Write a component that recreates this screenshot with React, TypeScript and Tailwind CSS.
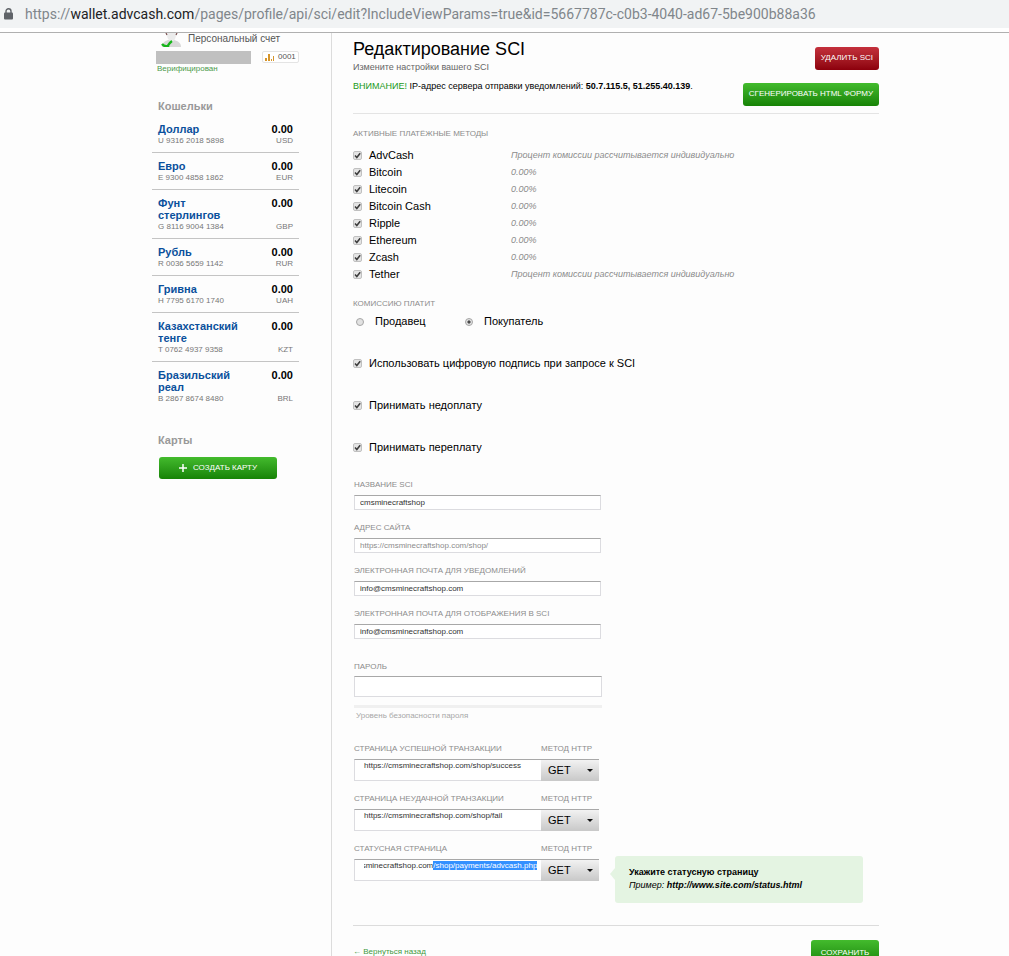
import { useEffect, useRef } from "react";
import type { ReactNode } from "react";

const wallets = [
  { name: "Доллар", number: "U 9316 2018 5898", code: "USD" },
  { name: "Евро", number: "E 9300 4858 1862", code: "EUR" },
  { name: "Фунт стерлингов", number: "G 8116 9004 1384", code: "GBP" },
  { name: "Рубль", number: "R 0036 5659 1142", code: "RUR" },
  { name: "Гривна", number: "H 7795 6170 1740", code: "UAH" },
  { name: "Казахстанский тенге", number: "T 0762 4937 9358", code: "KZT" },
  { name: "Бразильский реал", number: "B 2867 8674 8480", code: "BRL" },
];

const individual = "Процент комиссии рассчитывается индивидуально";

const methods = [
  { name: "AdvCash", fee: individual },
  { name: "Bitcoin", fee: "0.00%" },
  { name: "Litecoin", fee: "0.00%" },
  { name: "Bitcoin Cash", fee: "0.00%" },
  { name: "Ripple", fee: "0.00%" },
  { name: "Ethereum", fee: "0.00%" },
  { name: "Zcash", fee: "0.00%" },
  { name: "Tether", fee: individual },
];

const AddressBar = () => (
  <header className="shrink-0 border-b border-[#b0b0b0] bg-white pb-1">
    <div className="flex h-7 items-center gap-3 bg-[#f1f3f4] pl-1 font-[Roboto,sans-serif] text-sm text-[#80868b]">
      <svg className="h-3 w-[9px] shrink-0" viewBox="0 0 9 12" fill="none">
        <path d="M2 5V3.2a2.5 2.5 0 0 1 5 0V5" stroke="#5f6368" strokeWidth="1.4" />
        <rect y="4.5" width="9" height="7" rx="1" fill="#5f6368" />
      </svg>
      <span className="whitespace-nowrap">
        https://<span className="text-[#202124]">wallet.advcash.com</span>
        /pages/profile/api/sci/edit?IncludeViewParams=true&amp;id=5667787c-c0b3-4040-ad67-5be900b88a36
      </span>
    </div>
  </header>
);

const Avatar = () => (
  <svg className="h-[14px] w-5" viewBox="0 0 20 14" fill="none">
    <path d="M1 14c0-4 3-6 6-7h6c4 1 7 3 7 7z" fill="#d8d8d8" />
    <path d="M5 0h11l-2 6-3 4-4-4z" fill="#ebebeb" />
    <path d="M5 0l1 2M16 0l-1 2" stroke="#7a5050" strokeWidth="1.2" />
    <path d="M1 11c2 2.500 5 2.500 7 1.500M7 12.500c1-2 2-3 4-4.500" stroke="#18b51c" strokeWidth="2.400" />
  </svg>
);

const Check = ({ id }: { id: string }) => (
  <span className="grid size-[9px] shrink-0">
    <input
      id={id}
      type="checkbox"
      defaultChecked
      className="peer col-start-1 row-start-1 size-[9px] appearance-none rounded-xs border border-[#c0c0c0] bg-[#e4e4e4]"
    />
    <svg
      className="pointer-events-none invisible col-start-1 row-start-1 size-[9px] peer-checked:visible"
      viewBox="0 0 9 9"
      fill="none"
    >
      <path d="M2 4.600l1.800 1.900L7.200 2.200" stroke="#3c3c3c" strokeWidth="1.500" />
    </svg>
  </span>
);

const CheckRow = ({ id, children }: { id: string; children: ReactNode }) => (
  <div className="flex h-[17px] items-center gap-[7px]">
    <Check id={id} />
    <label htmlFor={id}>{children}</label>
  </div>
);

const Radio = ({ id, checked, children }: { id: string; checked?: boolean; children: ReactNode }) => (
  <div className="flex w-[109px] items-center gap-[11px]">
    <input
      id={id}
      type="radio"
      name="payer"
      defaultChecked={checked}
      className="size-2 appearance-none rounded-full border border-[#a6a6a6] bg-[#e2e2e2] checked:bg-[radial-gradient(circle,#4a4a4a_0_30%,#e2e2e2_45%)]"
    />
    <label htmlFor={id}>{children}</label>
  </div>
);

const caption = "block text-[8px] leading-[14px] text-[#8c8c8c] uppercase";
const box = "block w-full border border-[#dcdce0] border-t-[#a8a8a8] bg-white text-[8px] outline-none";
const green = "rounded-[3px] bg-linear-to-b from-[#43bb2d] to-[#168305] text-[8px] leading-3 text-white uppercase";

const Field = ({ id, label, value, muted }: { id: string; label: string; value: string; muted?: boolean }) => (
  <div>
    <label htmlFor={id} className={caption}>{label}</label>
    <input
      id={id}
      defaultValue={value}
      className={`${box} mt-[3px] h-[15px] px-[5px] ${muted ? "text-[#8c8c8c]" : "text-[#333]"}`}
    />
  </div>
);

const UrlField = ({ id, label, value, selectFrom }: { id: string; label: string; value: string; selectFrom?: number }) => {
  const ref = useRef<HTMLInputElement>(null);

  useEffect(() => {
    const el = ref.current;
    if (!el || selectFrom === undefined) return;
    el.focus({ preventScroll: true });
    el.setSelectionRange(selectFrom, el.value.length);
    el.scrollLeft = el.scrollWidth;
  }, [selectFrom]);

  return (
    <div className="flex">
      <div className="flex-1">
        <label htmlFor={id} className={caption}>{label}</label>
        <input
          ref={ref}
          id={id}
          defaultValue={value}
          className={`${box} mt-[3px] h-[22px] border-r-0 pr-1 pb-[10px] pl-[9px] text-[#333] selection:bg-[#3390ff] selection:text-white`}
        />
      </div>
      <div className="w-[58px]">
        <label htmlFor={`${id}-method`} className={caption}>Метод HTTP</label>
        <div className="mt-[3px] grid items-center">
          <select
            id={`${id}-method`}
            className="col-start-1 row-start-1 h-[22px] appearance-none border-t border-[#a8a8a8] bg-linear-to-b from-[#f2f2f2] to-[#c8c8c8] pl-[7px] text-[11px] text-black"
          >
            <option>GET</option>
            <option>POST</option>
          </select>
          <svg className="pointer-events-none col-start-1 row-start-1 mr-[6px] h-[3px] w-[6px] justify-self-end" viewBox="0 0 6 3">
            <path d="M0 0h6L3 3z" fill="#111" />
          </svg>
        </div>
      </div>
    </div>
  );
};

const Sidebar = () => (
  <aside className="w-[332px] shrink-0 border-r border-[#dcdcdc] pr-8 pl-[152px]">
    <div className="flex h-[14px] gap-[7px] pl-[9px]">
      <Avatar />
      <span className="text-[10px] leading-[11px] text-[#555]">Персональный счет</span>
    </div>
    <div className="mt-1 flex justify-between pl-1">
      <div className="h-[13px] w-[95px] bg-[#c0c0c0]" />
      <div className="flex h-3 w-[37px] items-center gap-1 rounded-xs border border-[#e4e4e4] bg-white pl-[2px] text-[8px] text-[#555]">
        <svg className="h-[7px] w-[9px]" viewBox="0 0 9 7" fill="#d6952b">
          <path d="M0 4h2v3H0zM3 0h2v7H3zM6 5h1v2H6zM8 2h1v5H8z" />
        </svg>
        0001
      </div>
    </div>
    <p className="pl-[5px] text-[8px] leading-[10px] text-[#4b9a4b]">Верифицирован</p>

    <h2 className="mt-[25px] pl-[6px] text-[11px] leading-[14px] font-bold text-[#999]">Кошельки</h2>
    <ul className="mt-[3px]">
      {wallets.map((w) => (
        <li key={w.code} className="flex justify-between border-b border-[#c4c4c4] pt-[7px] pr-[6px] pb-[5px] pl-[6px] last:border-0">
          <div className="w-[84px] text-[8px] leading-3 text-[#777]">
            <a href="#" className="block text-[11px] leading-3 font-bold text-[#0a509c]">{w.name}</a>
            {w.number}
          </div>
          <div className="flex flex-col justify-between text-right text-[8px] leading-3 text-[#777]">
            <span className="text-[11px] leading-3 font-bold text-black">0.00</span>
            {w.code}
          </div>
        </li>
      ))}
    </ul>

    <h2 className="mt-[23px] pl-[6px] text-[11px] leading-[14px] font-bold text-[#999]">Карты</h2>
    <button type="button" className={`${green} mt-[10px] ml-[7px] flex h-[22px] w-[118px] items-center justify-center gap-[6px]`}>
      <svg className="size-2" viewBox="0 0 8 8">
        <path d="M4 0v8M0 4h8" stroke="#fff" strokeWidth="1.500" />
      </svg>
      Создать карту
    </button>
  </aside>
);

export default function App() {
  return (
    <div className="flex h-screen flex-col overflow-hidden bg-[#fdfdfd] font-['Liberation_Sans',Arial,sans-serif] text-[11px] text-black">
      <AddressBar />
      <div className="flex min-h-0 flex-1">
        <Sidebar />
        <main className="max-w-[547px] flex-1 pl-[21px]">
          <div className="flex justify-between border-b border-[#e4e4e4] pb-[7px]">
            <div className="pt-1">
              <h1 className="text-lg leading-6">Редактирование SCI</h1>
              <p className="text-[9px] leading-3 text-[#666]">Измените настройки вашего SCI</p>
              <p className="mt-[7px] text-[9px] leading-3">
                <span className="text-[#1a9a1a]">ВНИМАНИЕ!</span> IP-адрес сервера отправки уведомлений:{" "}
                <b>50.7.115.5, 51.255.40.139</b>.
              </p>
            </div>
            <div className="flex flex-col items-end gap-[13px] pt-[14px]">
              <button type="button" className="h-[23px] rounded-[3px] bg-linear-to-b from-[#c4303c] to-[#8c000c] px-[6px] pb-[2px] text-[8px] leading-3 whitespace-nowrap text-white uppercase">
                Удалить SCI
              </button>
              <button type="button" className={`${green} h-[23px] px-[6px] pb-[2px] whitespace-nowrap`}>
                Сгенерировать HTML форму
              </button>
            </div>
          </div>

          <h2 className={`${caption} mt-[13px]`}>Активные платёжные методы</h2>
          <div className="mt-[6px]">
            {methods.map((m) => (
              <div key={m.name} className="flex">
                <div className="w-[158px]">
                  <CheckRow id={m.name}>{m.name}</CheckRow>
                </div>
                <span className="text-[9px] leading-4 text-[#8c8c8c] italic">{m.fee}</span>
              </div>
            ))}
          </div>

          <h2 className={`${caption} mt-[14px]`}>Комиссию платит</h2>
          <div className="mt-[2px] flex h-[17px] items-center pl-[3px]">
            <Radio id="seller">Продавец</Radio>
            <Radio id="buyer" checked>Покупатель</Radio>
          </div>

          <div className="mt-[25px] flex flex-col gap-[25px]">
            <CheckRow id="sign">Использовать цифровую подпись при запросе к SCI</CheckRow>
            <CheckRow id="under">Принимать недоплату</CheckRow>
            <CheckRow id="over">Принимать переплату</CheckRow>
          </div>

          <div className="mt-[22px] ml-px flex max-w-[247px] flex-col gap-[11px]">
            <Field id="name" label="Название SCI" value="cmsminecraftshop" />
            <Field id="site" label="Адрес сайта" value="https://cmsminecraftshop.com/shop/" muted />
            <Field id="mail-notify" label="Электронная почта для уведомлений" value="info@cmsminecraftshop.com" />
            <Field id="mail-sci" label="Электронная почта для отображения в SCI" value="info@cmsminecraftshop.com" />
          </div>

          <div className="mt-[21px] ml-px max-w-[248px]">
            <label htmlFor="password" className={caption}>Пароль</label>
            <input id="password" type="password" className={`${box} mt-[2px] h-[21px] px-[5px]`} />
            <div className="mt-2 h-[3px] bg-[#f0f0f0]" />
            <p className="mt-[2px] pl-[2px] text-[8px] leading-3 text-[#a8a8a8]">Уровень безопасности пароля</p>
          </div>

          <div className="relative mt-5 ml-px flex max-w-[245px] flex-col gap-[11px]">
            <UrlField id="success" label="Страница успешной транзакции" value="https://cmsminecraftshop.com/shop/success" />
            <UrlField id="fail" label="Страница неудачной транзакции" value="https://cmsminecraftshop.com/shop/fail" />
            <UrlField
              id="status"
              label="Статусная страница"
              value="https://cmsminecraftshop.com/shop/payments/advcash.php"
              selectFrom={28}
            />
            <div className="absolute top-[114px] left-full ml-4 h-[47px] w-[248px] rounded-[3px] bg-[#e4f4e2] pt-[10px] pl-[14px] text-[9px] leading-[13px]">
              <svg className="absolute top-3 right-full h-3 w-[5px]" viewBox="0 0 5 12">
                <path d="M5 0v12L0 6z" fill="#e4f4e2" />
              </svg>
              <b>Укажите статусную страницу</b>
              <p className="italic">
                Пример: <b>http://www.site.com/status.html</b>
              </p>
            </div>
          </div>

          <div className="mt-11 flex items-start justify-between border-t border-[#dcdcdc] pt-[14px]">
            <a href="#" className="mt-2 text-[8px] leading-2 text-[#3f9a3f]">← Вернуться назад</a>
            <button type="button" className={`${green} h-[25px] w-[68px]`}>Сохранить</button>
          </div>
        </main>
      </div>
    </div>
  );
}
